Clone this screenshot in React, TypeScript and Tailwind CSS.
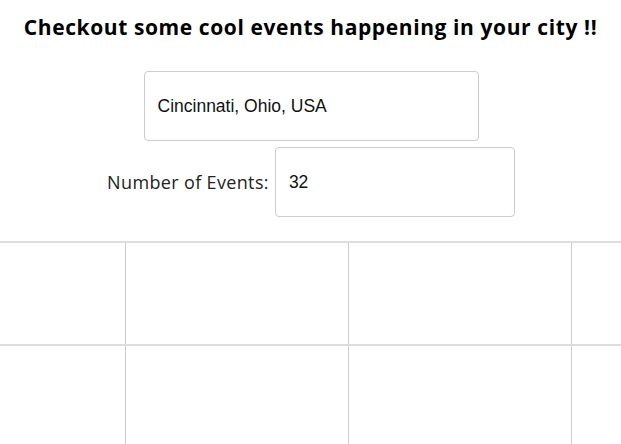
const rows = [0, 1];
const cols = [126, 223, 223, 223];

export default function App() {
  return (
    <div className="min-h-[444px] w-full overflow-hidden bg-white">
      <h1 className="pt-[13px] text-center font-['Open_Sans',sans-serif] text-[21px] font-bold leading-[28px] tracking-[0.6px] text-black">
        Checkout some cool events happening in your city !!
      </h1>

      <div className="mt-[30px] flex justify-center pl-px">
        <input
          type="text"
          defaultValue="Cincinnati, Ohio, USA"
          className="h-[70px] w-[335px] rounded-[4px] border border-[#cccccc] px-[13px] font-['Liberation_Sans',Arial,sans-serif] text-[17.5px] text-[#111] outline-none"
        />
      </div>

      <div className="mt-[6px] flex items-center justify-center gap-[6px] pl-px">
        <label className="font-['Open_Sans',sans-serif] text-[18px] tracking-[0.35px] text-[#222]">
          Number of Events:
        </label>
        <input
          type="text"
          defaultValue="32"
          className="h-[70px] w-[240px] rounded-[4px] border border-[#cccccc] px-[13px] font-['Liberation_Sans',Arial,sans-serif] text-[17.5px] text-[#111] outline-none"
        />
      </div>

      <div className="mt-[24px]">
        {rows.map((r) => (
          <div key={r} className="flex h-[103px] border-t-2 border-[#dddddd]">
            {cols.map((w, i) => (
              <div
                key={i}
                className="shrink-0 border-r border-[#cccccc]"
                style={{ width: w }}
              />
            ))}
          </div>
        ))}
      </div>
    </div>
  );
}
